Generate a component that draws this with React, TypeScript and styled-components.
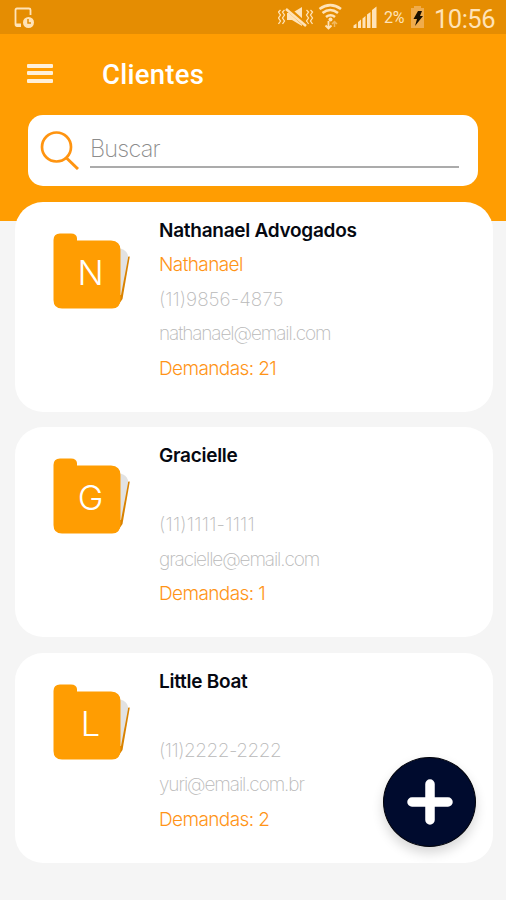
import React from "react";
import styled, { createGlobalStyle } from "styled-components";

const GlobalStyle = createGlobalStyle`
  * { box-sizing: border-box; }
  html, body { margin: 0; background: #f5f5f5; }
  body { font-family: Inter, "Liberation Sans", sans-serif; }
`;

const Screen = styled.div`
  position: relative;
  width: 506px;
  height: 900px;
  overflow: hidden;
  background: linear-gradient(#ff9d02 221px, #f5f5f5 221px);
`;

const StatusBar = styled.div`
  height: 34px;
  background: #e58d02;
  display: flex;
  justify-content: space-between;
`;

const NoticeIcon = styled.svg`
  display: block;
  margin-left: 12.5px;
`;

const StatusIcons = styled.div`
  display: flex;
  align-items: center;
  height: 34px;
  color: #ffe3b8;
  font-family: Roboto, sans-serif;
`;

const BatteryText = styled.span`
  width: 27px;
  font-size: 16px;
  line-height: 34px;
  letter-spacing: -0.2px;
  padding-top: 1px;
`;

const Clock = styled.span`
  width: 72px;
  font-size: 25.5px;
  line-height: 34px;
  padding-top: 4px;
  letter-spacing: -0.5px;
`;

const TitleBar = styled.header`
  height: 81px;
  display: flex;
  align-items: center;
  padding-left: 27px;
`;

const MenuButton = styled.div`
  width: 26px;
  height: 19px;
  margin-right: 49px;
  margin-top: -3px;
  display: flex;
  flex-direction: column;
  justify-content: space-between;
`;

const MenuLine = styled.span`
  height: 4px;
  border-radius: 1px;
  background: #fff0da;
`;

const Title = styled.h1`
  margin: 0;
  color: #fff;
  font: 500 27.5px/32px Roboto, sans-serif;
  letter-spacing: 0.25px;
`;

const SearchBox = styled.div`
  margin: 0 28px;
  width: 450px;
  height: 71px;
  border-radius: 15px;
  background: #fff;
  display: flex;
  padding: 16px 19px 0 12px;
`;

const SearchField = styled.div`
  margin-left: 11px;
  flex: 1;
  height: 37px;
  border-bottom: 2px solid #ababab;
  color: #8c8c8c;
  font-weight: 200;
  font-size: 23.5px;
  line-height: 36px;
  letter-spacing: -0.8px;
`;

const CardList = styled.main`
  padding: 15.5px 13.5px 0 14.5px;
  display: grid;
  gap: 15.5px;
`;

const Card = styled.section`
  height: 210px;
  border-radius: 28px;
  background: #fff;
  display: flex;
`;

const Folder = styled.div`
  width: 144.5px;
  padding: 30px 0 0 36.5px;
`;

const FolderLetter = styled.text`
  fill: #fff;
  font-family: Inter, sans-serif;
  font-weight: 300;
  font-size: 34.5px;
  text-anchor: middle;
`;

const Details = styled.div`
  padding-top: 11px;
`;

type Kind = "name" | "accent" | "muted";

const styles: Record<Kind, { color: string; weight: number; spacing: number }> = {
  name: { color: "#050811", weight: 600, spacing: -0.27 },
  accent: { color: "#ff9417", weight: 300, spacing: -0.6 },
  muted: { color: "#b9b9b9", weight: 200, spacing: -1.1 },
};

const Line = styled.div<{ $kind: Kind; $spacing?: number }>`
  height: 34.5px;
  line-height: 35px;
  white-space: nowrap;
  color: ${(p) => styles[p.$kind].color};
  font-weight: ${(p) => styles[p.$kind].weight};
  font-size: 19px;
  letter-spacing: ${(p) => p.$spacing ?? styles[p.$kind].spacing}px;
`;

const AddButton = styled.div`
  position: absolute;
  left: 383px;
  top: 757px;
  width: 93px;
  height: 90px;
  border-radius: 50%;
  background: #000b2e;
  border: 1px solid #02040c;
  box-shadow: 0 6px 12px rgba(0, 0, 0, 0.16);
  display: flex;
  align-items: center;
  justify-content: center;
`;

const clients = [
  { name: "Nathanael Advogados", contact: "Nathanael", phone: "(11)9856-4875", phoneSpacing: 0, email: "nathanael@email.com", count: 21 },
  { name: "Gracielle", contact: "", phone: "(11)1111-1111", phoneSpacing: 0.2, email: "gracielle@email.com", count: 1 },
  { name: "Little Boat", contact: "", phone: "(11)2222-2222", phoneSpacing: -0.5, email: "yuri@email.com.br", count: 2 },
];

function FolderIcon({ letter }: { letter: string }) {
  return (
    <svg width="82" height="80" viewBox="0 0 82 80">
      <path d="M74 25L78.800 24.500L71.500 67L66 75Z" fill="#d98200" />
      <path d="M66 15L72 17.500Q77.500 20 77 26L70 63H64Z" fill="#e2e2e2" />
      <path d="M9 1.500H20Q25.500 1.500 26 6V8.500H60Q69.500 9 69.500 18V67Q69.500 76.500 61 76.500H11Q2.500 76.500 2.500 68V8Q2.500 1.500 9 1.500Z" fill="#ff9d02" />
      <FolderLetter x="39.500" y="53">{letter}</FolderLetter>
    </svg>
  );
}

function StatusIndicators() {
  return (
    <svg width="106" height="34" viewBox="278 0 106 34" fill="none" stroke="#ffe3b8">
      <path d="M281 10l-2 2 2 3-2 3 2 3-2 3M285 10l-2 2 2 3-2 3 2 3-2 3M307 10l2 2-2 3 2 3-2 3 2 3M311 10l2 2-2 3 2 3-2 3 2 3" transform="translate(-.5 0)" strokeWidth="1.3" />
      <path d="M287 13h5l10-6v19l-10-6h-5z" fill="#ffe3b8" stroke="none" />
      <path d="M287 8l19 17" stroke="#e58d02" strokeWidth="5" />
      <path d="M286 9l20 17" strokeWidth="2.5" />
      <path d="M319.500 9q10.800-7.800 21.500 0M322.500 13q7.700-6 15.500 0M326 17q4.500-3.500 9 0" strokeWidth="2.600" />
      <circle cx="330.500" cy="19.500" r="2" fill="#ffe3b8" stroke="none" />
      <path d="M328.500 21v7m-3-2.500l3 3 3-3" strokeWidth="1.800" />
      <path d="M334.500 27v-5m-2.500 2l2.500-2.500 2.500 2.500" strokeWidth="1.500" opacity=".5" />
      <path d="M353.500 28v-2.500l3-2V28zM358 28v-6l3-2.500V28zM362.500 28v-9.500l3-2.500V28zM367 28V14.500l3.500-2.500v16zM372 28V10l4.500-3.500V28z" fill="#ffe3b8" stroke="none" />
    </svg>
  );
}

export default function App() {
  return (
    <Screen>
      <GlobalStyle />
      <StatusBar>
        <NoticeIcon width="24" height="34" viewBox="0 0 24 34" fill="none">
          <path d="M8 26H4Q2.500 26 2.500 24V10Q2.500 8.500 4 8.500H16Q17.500 8.500 17.500 10V15M2.500 24.500H8" stroke="#ffe3b8" strokeWidth="1.800" />
          <circle cx="15.500" cy="22.500" r="5.500" fill="#ffe3b8" />
          <path d="M15 19v4h3" stroke="#e58d02" strokeWidth="1.500" />
        </NoticeIcon>
        <StatusIcons>
          <StatusIndicators />
          <BatteryText>2%</BatteryText>
          <svg width="23" height="34" viewBox="0 0 23 34">
            <path d="M0 8h3V6h7v2h3v20H0V8z" fill="#f0ac4c" />
            <path d="M7 11h4l-2 5h3L4 26l2-7H2.500z" fill="#191000" />
          </svg>
          <Clock>10:56</Clock>
        </StatusIcons>
      </StatusBar>
      <TitleBar>
        <MenuButton>
          <MenuLine />
          <MenuLine />
          <MenuLine />
        </MenuButton>
        <Title>Clientes</Title>
      </TitleBar>
      <SearchBox>
        <svg width="39" height="39" viewBox="0 0 39 39" fill="none" stroke="#ff9410">
          <circle cx="16.500" cy="16" r="14.500" strokeWidth="2.700" />
          <path d="M26.500 27L38 38" strokeWidth="3" />
        </svg>
        <SearchField>Buscar</SearchField>
      </SearchBox>
      <CardList>
        {clients.map((c) => (
          <Card key={c.name}>
            <Folder>
              <FolderIcon letter={c.name[0]} />
            </Folder>
            <Details>
              <Line $kind="name">{c.name}</Line>
              <Line $kind="accent">{c.contact}</Line>
              <Line $kind="muted" $spacing={c.phoneSpacing}>{c.phone}</Line>
              <Line $kind="muted">{c.email}</Line>
              <Line $kind="accent">Demandas: {c.count}</Line>
            </Details>
          </Card>
        ))}
      </CardList>
      <AddButton>
        <svg width="48" height="48" viewBox="0 0 48 48">
          <path d="M24 6v36M6 24h36" stroke="#fff" strokeWidth="9.500" strokeLinecap="round" />
        </svg>
      </AddButton>
    </Screen>
  );
}
